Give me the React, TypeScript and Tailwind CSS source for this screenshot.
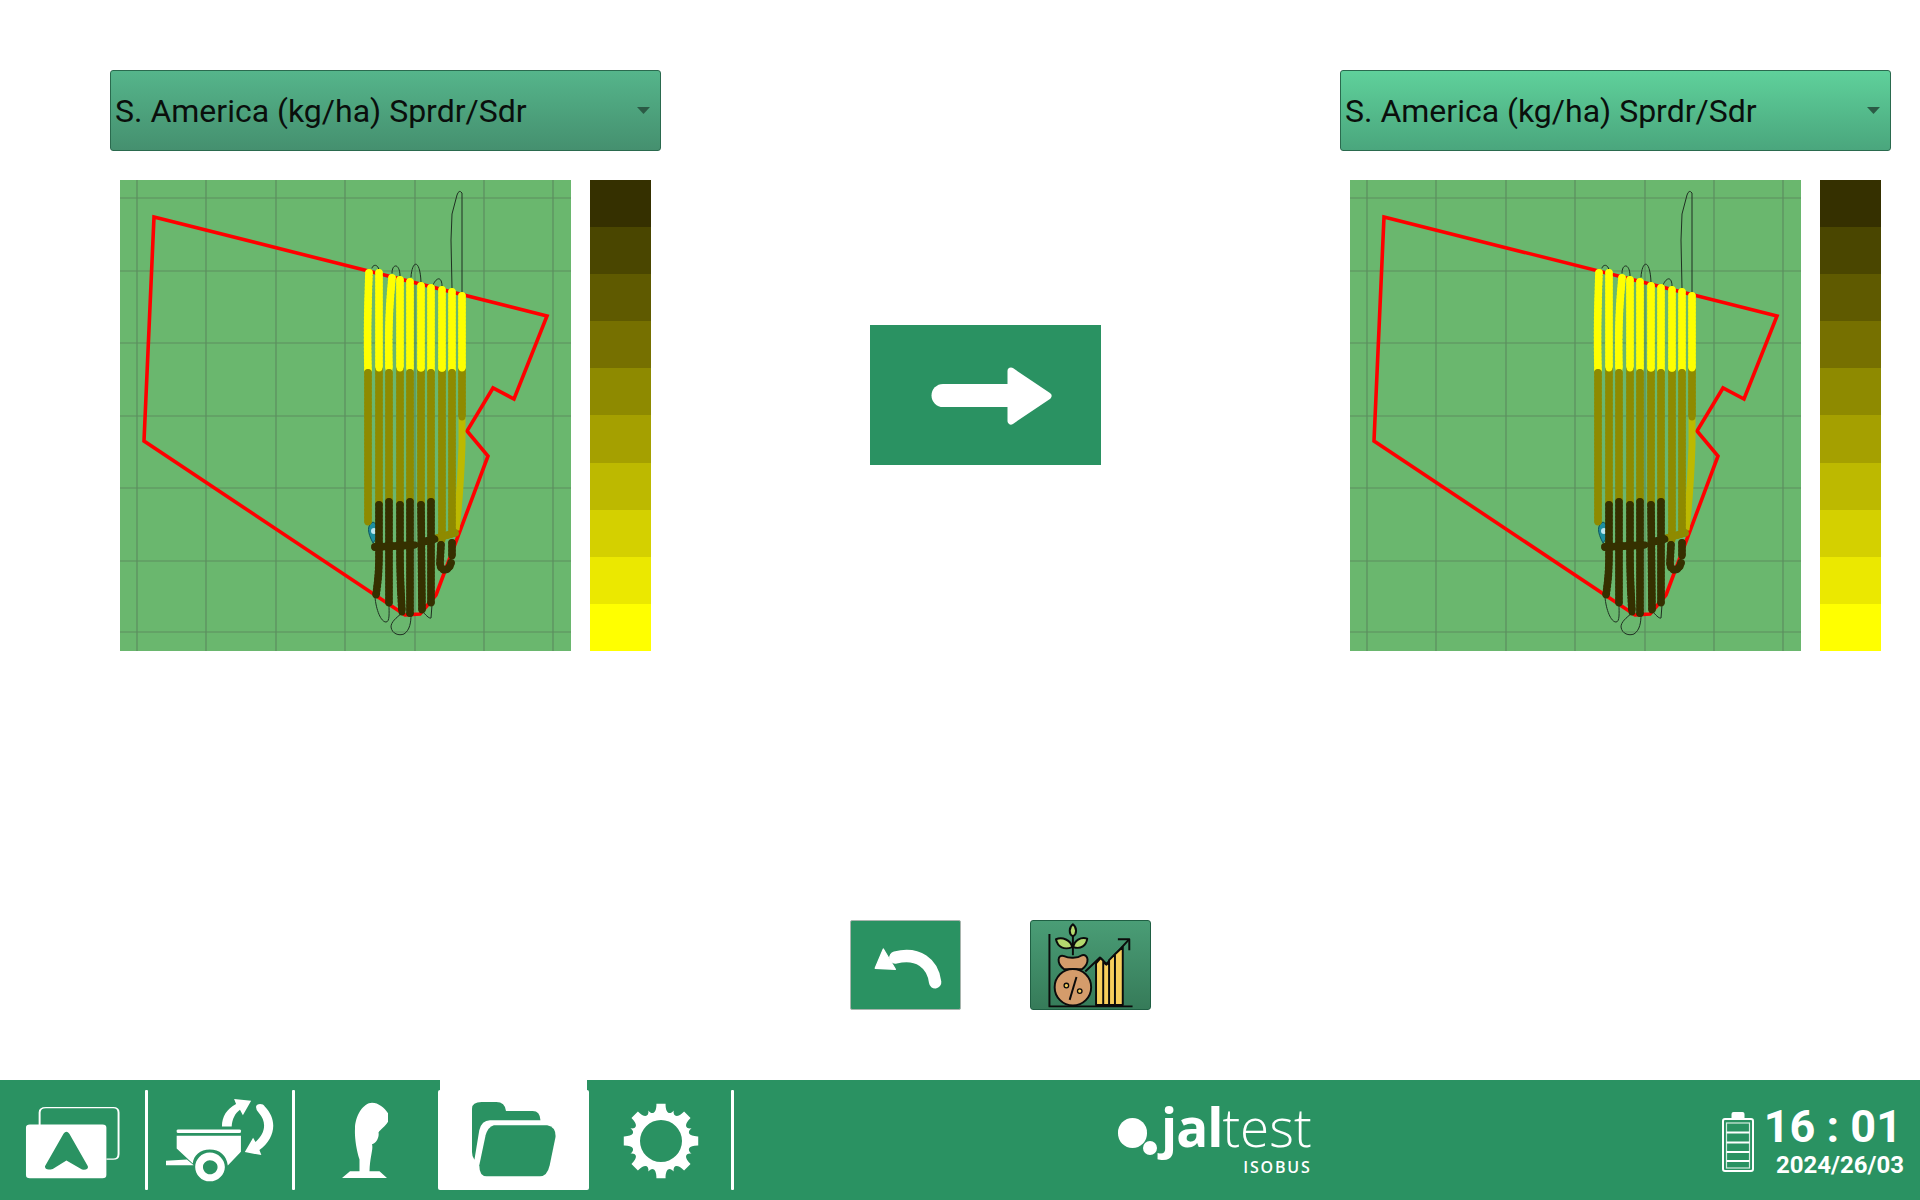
const legend = ['#353000', '#4a4600', '#5f5a00', '#767000', '#8e8a00', '#a5a000', '#bdb900', '#d4d000', '#ebe800', '#ffff00'];

const gridX = [17, 86, 156, 225, 295, 364, 433];
const gridY = [18, 91, 163, 236, 308, 381, 452];

const yellow = [
  'M249 93 C248 120 247 150 248 190',
  'M259 93 L259 188',
  'M272 98 C270 120 268 140 269 190',
  'M280 100 L280 188',
  'M290 102 L290 190',
  'M301 106 L301 188',
  'M311 108 L311 190',
  'M322 110 L322 188',
  'M332 112 L332 190',
  'M342 116 L342 188',
];
const oliveUnder = [
  'M259 190 L259 325',
  'M280 190 L280 325',
  'M301 190 L301 325',
  'M322 190 L322 360',
  'M342 190 L342 237',
  'M317 358 L335 353',
];
const oliveOver = [
  'M248 193 L248 342',
  'M269 193 L269 322',
  'M290 193 L290 322',
  'M311 193 L311 322',
  'M332 193 L332 353',
];
const dark = [
  'M259 325 L259 377 C259 390 258 402 256 415',
  'M269 322 L269 423',
  'M280 325 L280 373 C280 395 281 415 282 432',
  'M290 322 L290 433',
  'M301 325 L302 430',
  'M311 322 L311 423',
  'M255 367 L295 365',
  'M303 362 L315 359',
  'M321 365 L320 383 C320 392 329 392 331 383',
  'M332 363 L332 376',
];
const outlines = [
  'M252 88 C253 84 258 84 259 90',
  'M272 93 C272 83 280 83 280 96',
  'M291 97 C292 80 300 78 301 102',
  'M313 105 C317 96 322 97 322 106',
  'M332 108 L331 60 L332 34 L337 15 Q339 9 342 13 L342 115',
  'M255 417 C256 430 261 442 266 442 C270 442 269 432 269 425',
  'M282 433 C276 438 271 442 271 447 C272 454 279 456 284 454 C290 450 291 442 291 435',
  'M303 432 C305 434 309 439 311 438 L312 425',
];

function FieldMap() {
  return (
    <svg viewBox="0 0 451 471" className="w-[451px] h-[471px] bg-[#6ab76e] shrink-0">
      {gridX.map((x) => (
        <line key={x} x1={x} y1={0} x2={x} y2={471} stroke="#5c8d5f" strokeWidth="1.2" />
      ))}
      {gridY.map((y) => (
        <line key={y} x1={0} y1={y} x2={451} y2={y} stroke="#5c8d5f" strokeWidth="1.2" />
      ))}
      <path d="M253 342 C247 345 247 352 253 363 C259 356 261 346 253 342Z" fill="#1c8fa0" stroke="#0d5560" strokeWidth="1" />
      <circle cx="254" cy="351" r="3" fill="#bfe6ee" />
      <polygon
        points="34,37 427,136 394,219 373,208 347,251 368,276 316,415 300,434 285,435 24,261"
        fill="none"
        stroke="#ff0000"
        strokeWidth="3.6"
        strokeLinejoin="miter"
      />
      <g fill="none" stroke="#1f2f22" strokeWidth="1" strokeLinecap="round">
        {outlines.map((d) => (
          <path key={d} d={d} />
        ))}
      </g>
      <path d="M342 237 L342 265 C341 295 339 325 336 350" fill="none" stroke="#bdb900" strokeWidth="7" />
      <Stroked paths={oliveUnder} color="#8e8a00" />
      <Stroked paths={yellow} color="#ffff00" />
      <Stroked paths={oliveOver} color="#8e8a00" />
      <Stroked paths={dark} color="#353000" />
    </svg>
  );
}

function Stroked({ paths, color }: { paths: string[]; color: string }) {
  return (
    <g fill="none" stroke={color} strokeLinecap="round" strokeLinejoin="round">
      {paths.map((d) => (
        <g key={d}>
          <path d={d} strokeWidth="6.8" />
          <path d={d} strokeWidth="7.8" strokeDasharray="0.1 3.6" />
        </g>
      ))}
    </g>
  );
}

function Panel({ gradient }: { gradient: string }) {
  return (
    <div className="w-[551px] shrink-0">
      <div className={`h-[81px] rounded-[3px] border border-[#2a6a4e] flex items-center justify-between pl-1 pr-[10px] ${gradient}`}>
        <span className="text-[32px] leading-none text-[#0a0f0c] font-['Roboto',sans-serif]">S. America (kg/ha) Sprdr/Sdr</span>
        <svg width="13" height="7" viewBox="0 0 13 7">
          <polygon points="0,0 13,0 6.5,7" fill="#2b5a45" />
        </svg>
      </div>
      <div className="flex gap-[19px] pl-[10px] mt-[29px]">
        <FieldMap />
        <div className="w-[61px] h-[471px] flex flex-col">
          {legend.map((c) => (
            <div key={c} className="flex-1" style={{ backgroundColor: c }} />
          ))}
        </div>
      </div>
    </div>
  );
}

function MapIcon() {
  return (
    <svg viewBox="55 105 197 224" preserveAspectRatio="none" className="w-[96px] h-[73px]">
      <path d="M85 165 L85 125 Q85 110 98 110 L236 110 Q247 110 247 125 L247 252 Q247 268 236 268 L222 268" fill="none" stroke="white" strokeWidth="4" />
      <path d="M65 162 L214 162 Q222 162 222 172 L222 317 Q222 327 214 327 L65 327 Q57 327 57 317 L57 172 Q57 162 65 162Z" fill="white" />
      <path d="M134 190 Q140 178 146 190 L184 290 Q186 302 172 300 L140 272 L112 298 Q96 304 96 290Z" fill="#2a9262" />
    </svg>
  );
}

function SpreaderIcon() {
  return (
    <svg viewBox="343 85 226 250" preserveAspectRatio="none" className="w-[110px] h-[84px]">
      <g fill="white">
        <rect x="367" y="179" width="132" height="10" rx="3" />
        <path d="M367 197 L499 197 L499 245 L472 286 C470 255 455 238 435 238 C415 238 402 255 400 280 L367 235Z" />
        <path d="M345 272 L388 268 L402 285 L345 285Z" />
        <path fillRule="evenodd" d="M435 247 C452 247 466 268 466 290 C466 313 452 333 435 333 C418 333 405 313 405 290 C405 268 418 247 435 247Z M435 270 C428 270 421 279 421 290 C421 302 428 312 435 312 C444 312 451 302 451 290 C451 279 444 270 435 270Z" />
        <path d="M460 170 C460 140 470 118 489 103 L485 88 L520 93 L503 136 L497 120 C487 130 481 148 480 170Z" />
        <path d="M530 112 C530 100 545 100 548 110 C575 150 570 205 537 240 L541 255 L507 246 L524 203 L529 216 C550 190 552 155 536 130 Q530 122 530 112Z" />
      </g>
    </svg>
  );
}

function JoystickIcon() {
  return (
    <svg viewBox="705 100 94 228" preserveAspectRatio="none" className="w-[47px] h-[77px]">
      <path fill="white" d="M767 102 C783 102 798 125 803 145 C800 165 785 180 780 190 C782 205 775 222 767 225 C770 240 763 260 762 305 L782 305 L797 325 L707 325 L723 305 L742 305 L742 270 C735 240 732 200 733 180 C733 140 750 102 767 102Z" />
    </svg>
  );
}

function FolderIcon() {
  return (
    <svg viewBox="975 95 173 225" preserveAspectRatio="none" className="w-[84px] h-[75px]">
      <g fill="#2a9262">
        <path d="M975 115 Q975 95 995 95 L1025 95 Q1043 95 1045 122 L1100 122 Q1115 122 1116 150 L1012 150 Q995 150 990 180 L980 268 Q975 260 975 245Z" />
        <path d="M1020 165 L1130 165 Q1148 170 1147 200 L1135 285 Q1130 318 1115 318 L1005 318 Q990 318 990 285 L1003 195 Q1008 170 1020 165Z" />
      </g>
    </svg>
  );
}

function gearPath() {
  const pt = (deg: number, r: number) => {
    const a = (deg * Math.PI) / 180;
    return `${(38 + r * Math.sin(a)).toFixed(2)} ${(38 - r * Math.cos(a)).toFixed(2)}`;
  };
  let d = '';
  for (let i = 0; i < 8; i++) {
    const a = i * 45;
    d += `${i === 0 ? 'M' : 'L'}${pt(a - 7, 37.5)} L${pt(a + 7, 37.5)} `;
    d += `C${pt(a + 9, 28)} ${pt(a + 19, 27)} ${pt(a + 22.5, 33)} C${pt(a + 26, 27)} ${pt(a + 36, 28)} ${pt(a + 38, 37.5)} `;
  }
  return `${d}Z M38 17 A21 21 0 1 0 38 59 A21 21 0 1 0 38 17Z`;
}

function GearIcon() {
  return (
    <svg viewBox="0 0 76 76" className="w-[76px] h-[76px]">
      <path fill="white" fillRule="evenodd" d={gearPath()} />
    </svg>
  );
}

function BatteryIcon() {
  return (
    <svg viewBox="0 0 32 60" className="w-[32px] h-[60px] shrink-0">
      <path d="M9.5 7 L9.5 2 Q9.5 0 11.5 0 L20.5 0 Q22.5 0 22.5 2 L22.5 7Z" fill="white" />
      <rect x="1" y="7" width="30" height="52" rx="2" fill="none" stroke="white" strokeWidth="2" />
      <rect x="4.5" y="11" width="23" height="45" fill="none" stroke="#d5ece0" strokeWidth="1.2" />
      {[19.5, 29.5, 39, 48].map((y) => (
        <rect key={y} x="4.5" y={y} width="23" height="2" fill="white" />
      ))}
    </svg>
  );
}

function Sep() {
  return <div className="w-[3px] h-[100px] mt-[10px] rounded-[1px] bg-white shrink-0" />;
}

export default function App() {
  return (
    <div className="w-[1920px] h-[1200px] flex flex-col bg-white overflow-hidden font-['Roboto',sans-serif]">
      <div className="flex-1 flex flex-col">
        <div className="flex items-start pt-[70px] pl-[110px]">
          <Panel gradient="bg-gradient-to-b from-[#55b58b] to-[#45906f]" />
          <div className="w-[231px] h-[140px] ml-[209px] mt-[255px] bg-[#2a9262] shrink-0 flex items-center justify-center pl-[13px] pt-[2px]">
            <svg viewBox="0 0 122 58" className="w-[122px] h-[58px]">
              <path d="M12 28.5 L80 28.5" stroke="white" strokeWidth="23" strokeLinecap="round" />
              <path d="M80 4 L117 29 L80 54Z" fill="white" stroke="white" strokeWidth="7" strokeLinejoin="round" />
            </svg>
          </div>
          <div className="ml-[239px]">
            <Panel gradient="bg-gradient-to-b from-[#5fd19b] to-[#4aa67d]" />
          </div>
        </div>
        <div className="mt-auto flex pl-[850px] pb-[70px] gap-[69px]">
          <div className="w-[111px] h-[90px] bg-[#2a9262] border border-[#a9b5ae] rounded-[2px]">
            <svg viewBox="30 60 332 270" className="w-full h-full">
              <path d="M287 248 C280 190 235 155 165 172" fill="none" stroke="white" strokeWidth="38" strokeLinecap="round" />
              <path d="M128 146 L103 205 L165 208Z" fill="white" stroke="white" strokeWidth="4" strokeLinejoin="round" />
            </svg>
          </div>
          <div className="w-[121px] h-[90px] rounded-[3px] border border-[#1f5f43] bg-gradient-to-b from-[#4a9d76] to-[#367b59]">
            <svg viewBox="570 60 362 270" className="w-full h-full">
              <g stroke="#0b0b0b" strokeWidth="6" strokeLinejoin="round">
                <path d="M625 100 V322 H880" fill="none" />
                <path d="M735 215 L780 172 L800 192 L868 118" fill="none" />
                <path d="M835 116 H870 V150" fill="none" />
                <path d="M768 318 V190 L782 174 L790 182 V318Z M790 318 V186 L800 194 L808 186 V318Z M808 318 V180 L826 162 V318Z M826 318 V162 L850 140 V318Z" fill="#f8cf5c" />
                <path d="M697 108 V165" fill="none" />
                <path d="M697 70 C710 80 710 100 697 107 C684 100 684 80 697 70Z" fill="#b4d96e" />
                <path d="M645 116 C665 108 690 118 695 140 C670 150 650 140 645 116Z" fill="#b4d96e" />
                <path d="M741 114 C720 108 702 120 698 140 C722 148 738 135 741 114Z" fill="#b4d96e" />
                <path d="M670 208 C645 190 650 160 670 168 C685 175 710 175 725 165 C745 160 750 190 725 208Z" fill="#d49c6b" />
                <circle cx="697" cy="263" r="56" fill="#d49c6b" />
                <path d="M708 232 L687 302" fill="none" />
                <circle cx="677" cy="258" r="7" fill="#f8cf5c" strokeWidth="4" />
                <circle cx="718" cy="275" r="7" fill="#f8cf5c" strokeWidth="4" />
              </g>
            </svg>
          </div>
        </div>
      </div>
      <div className="h-[120px] bg-[#2a9262] flex items-start text-white shrink-0">
        <div className="w-[145px] flex justify-center pt-[26px] shrink-0"><MapIcon /></div>
        <Sep />
        <div className="w-[144px] flex justify-center pt-[18px] shrink-0"><SpreaderIcon /></div>
        <Sep />
        <div className="w-[143px] flex justify-center pr-[4px] pt-[22px] shrink-0"><JoystickIcon /></div>
        <div className="w-[151px] flex flex-col items-center shrink-0">
          <div className="w-[147px] h-[10px] bg-white" />
          <div className="w-[151px] h-[100px] bg-white rounded-[2px] flex justify-center pt-[12px]"><FolderIcon /></div>
        </div>
        <div className="w-[142px] flex justify-center pl-[2px] pt-[23px] shrink-0"><GearIcon /></div>
        <Sep />
        <div className="ml-[384px] flex items-start pt-[18px]">
          <div className="relative w-[43px] h-[40px] shrink-0">
            <div className="w-[29px] h-[30px] mt-[20px] rounded-full bg-white" />
            <div className="absolute left-[25px] top-[43px] w-[14px] h-[14px] rounded-full bg-white" />
          </div>
          <div className="flex flex-col items-end">
            <div className="text-[53px] leading-[58px] font-['Open_Sans',sans-serif]"><span className="font-bold tracking-[-1px]">jal</span><span className="font-light">test</span></div>
            <div className="text-[16px] leading-[16px] mt-[3px] font-semibold tracking-[1.8px] font-['Open_Sans',sans-serif]">ISOBUS</div>
          </div>
        </div>
        <div className="ml-auto flex items-start pt-[32px] pr-[16px]">
          <BatteryIcon />
          <div className="ml-[10px] flex flex-col items-end -mt-[7px]">
            <div className="text-[45px] leading-[44px] pr-[2px] font-bold whitespace-pre">16 : 01</div>
            <div className="text-[24px] leading-[24px] mt-[4px] font-bold">2024/26/03</div>
          </div>
        </div>
      </div>
    </div>
  );
}
